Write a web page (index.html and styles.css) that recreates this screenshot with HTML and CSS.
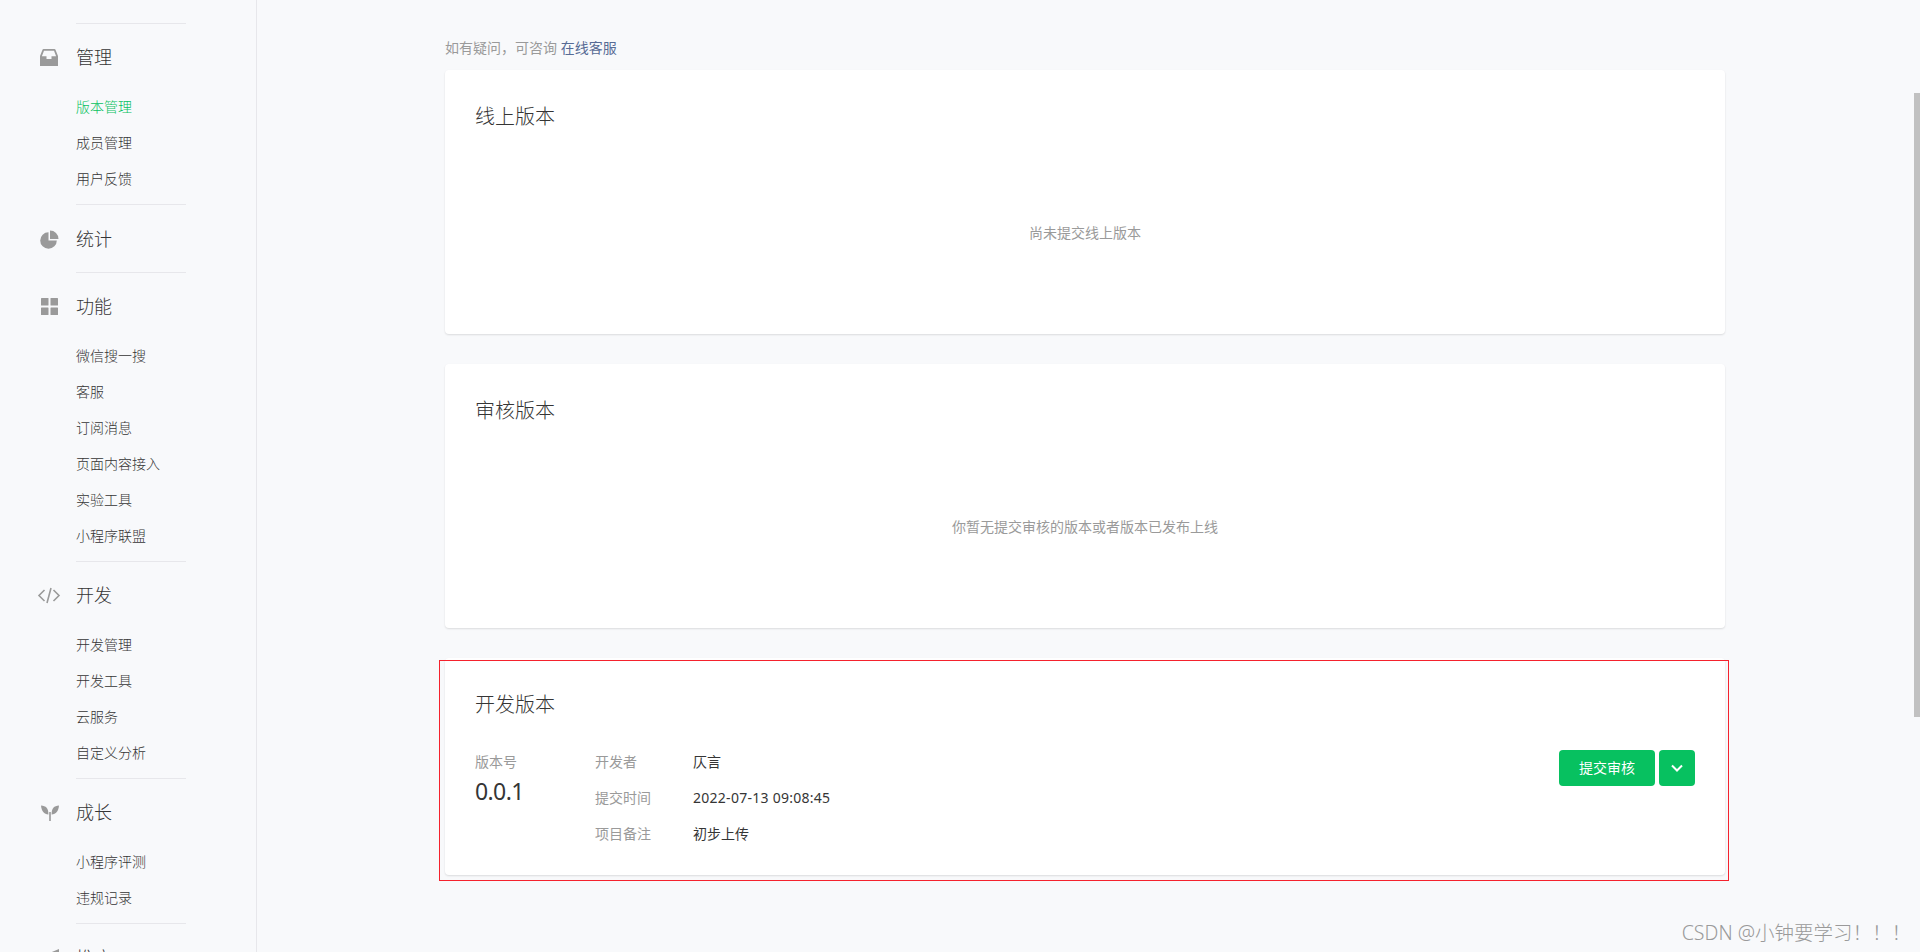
FILE: index.html
```html
<!DOCTYPE html>
<html lang="zh-CN">
<head>
<meta charset="utf-8">
<title>版本管理</title>
<link rel="stylesheet" href="styles.css">
</head>
<body>
<div class="page">

  <div class="sidebar">
    <div class="nav-group">
      <div class="nav-title">
        <svg class="nav-icon" viewBox="0 0 24 24"><path fill-rule="evenodd" d="M6.500 4h11a1 1 0 0 1 .9.6L21 11v10H3V11l2.600-6.400a1 1 0 0 1 .9-.6zM7 5.800 4.900 11.200H9.500V14h5v-2.800h4.600L17 5.800z"/></svg>
        <span>管理</span>
      </div>
      <div class="nav-sub">
        <a class="nav-item active">版本管理</a>
        <a class="nav-item">成员管理</a>
        <a class="nav-item">用户反馈</a>
      </div>
    </div>
    <div class="nav-group flat">
      <div class="nav-title">
        <svg class="nav-icon" viewBox="0 0 24 24"><path d="M11.500 5.200v8.300h8.300A8.300 8.300 0 1 1 11.500 5.200z"/><path d="M13 3.500a8.500 8.500 0 0 1 8.500 8.500H13z"/></svg>
        <span>统计</span>
      </div>
    </div>
    <div class="nav-group">
      <div class="nav-title">
        <svg class="nav-icon" viewBox="0 0 24 24"><rect x="4" y="4" width="7.500" height="7.500" rx=".5"/><rect x="13.500" y="4" width="7.500" height="7.500" rx=".5"/><rect x="4" y="13.500" width="7.500" height="7.500" rx=".5"/><rect x="13.500" y="13.500" width="7.500" height="7.500" rx=".5"/></svg>
        <span>功能</span>
      </div>
      <div class="nav-sub">
        <a class="nav-item">微信搜一搜</a>
        <a class="nav-item">客服</a>
        <a class="nav-item">订阅消息</a>
        <a class="nav-item">页面内容接入</a>
        <a class="nav-item">实验工具</a>
        <a class="nav-item">小程序联盟</a>
      </div>
    </div>
    <div class="nav-group">
      <div class="nav-title">
        <svg class="nav-icon code" viewBox="0 0 24 24"><path d="M7.500 7 2 12.500 7.500 18M16.500 7 22 12.500 16.500 18M14 5 10 20"/></svg>
        <span>开发</span>
      </div>
      <div class="nav-sub">
        <a class="nav-item">开发管理</a>
        <a class="nav-item">开发工具</a>
        <a class="nav-item">云服务</a>
        <a class="nav-item">自定义分析</a>
      </div>
    </div>
    <div class="nav-group">
      <div class="nav-title">
        <svg class="nav-icon" viewBox="0 0 24 24"><path d="M4 5.500c5 .2 7.500 3 7.400 9C7 14 4.500 11 4 5.500z"/><path d="M22 5.500c-5 .2-7.500 3-7.400 9 4.400-.5 6.900-3.500 7.400-9z"/><rect x="12.200" y="12" width="1.600" height="9"/></svg>
        <span>成长</span>
      </div>
      <div class="nav-sub">
        <a class="nav-item">小程序评测</a>
        <a class="nav-item">违规记录</a>
      </div>
    </div>
    <div class="nav-group flat">
      <div class="nav-title">
        <svg class="nav-icon" viewBox="0 0 24 24"><path d="M10 8 22 3v18l-12-4H5v-9z"/></svg>
        <span>推广</span>
      </div>
    </div>
  </div>

  <div class="main">
    <div class="content">
      <p class="tips">如有疑问，可咨询 <a class="link">在线客服</a></p>

      <div class="card">
        <h3 class="card-title">线上版本</h3>
        <div class="empty">尚未提交线上版本</div>
      </div>

      <div class="card">
        <h3 class="card-title">审核版本</h3>
        <div class="empty">你暂无提交审核的版本或者版本已发布上线</div>
      </div>

      <div class="card dev">
        <h3 class="card-title">开发版本</h3>
        <div class="version">
          <div class="version-no">
            <div class="label">版本号</div>
            <div class="number">0.0.1</div>
          </div>
          <div class="info">
            <div class="info-row"><span class="label">开发者</span><span class="value">仄言</span></div>
            <div class="info-row"><span class="label">提交时间</span><span class="value date">2022-07-13 09:08:45</span></div>
            <div class="info-row"><span class="label">项目备注</span><span class="value">初步上传</span></div>
          </div>
          <div class="actions">
            <button class="btn">提交审核</button>
            <button class="btn more"><svg viewBox="0 0 12 8"><path d="M1 1.500 6 6.500l5-5"/></svg></button>
          </div>
        </div>
        <div class="mark"></div>
      </div>
    </div>
  </div>

  <div class="scroll-thumb"></div>
  <div class="watermark">CSDN @小钟要学习！！！</div>
</div>
</body>
</html>
```

FILE: styles.css
```css
* {
  box-sizing: border-box;
}

html, body {
  margin: 0;
  height: 100%;
  overflow: hidden;
}

body {
  background: #f8f9fb;
  color: #353535;
  font: 14px/20px "Noto Sans", "Noto Sans CJK SC", sans-serif;
}

.page {
  position: relative;
  display: flex;
  height: 952px;
  overflow: hidden;
  padding-right: 7px;
}

/* left menu */
.sidebar {
  width: 257px;
  flex: none;
  padding-top: 23px;
  border-right: 1px solid #e7e7eb;
}

.nav-group {
  margin-left: 37px;
  padding-bottom: 7px;
}

.nav-group::before {
  content: "";
  display: block;
  width: 110px;
  height: 1px;
  margin-left: 39px;
  background: #e7e7eb;
}

.nav-title {
  display: flex;
  align-items: center;
  height: 24px;
  margin: 21px 0 20px;
  font-size: 18px;
  font-weight: 300;
}

.flat {
  padding-bottom: 1px;
}

.flat .nav-title {
  margin-top: 22px;
}

.nav-icon {
  width: 24px;
  height: 24px;
  margin-right: 15px;
  fill: #9a9a9a;
}

.nav-icon.code {
  fill: none;
  stroke: #9a9a9a;
  stroke-width: 1.6;
}

.nav-sub {
  padding-left: 39px;
}

.nav-item {
  display: block;
  height: 36px;
  line-height: 36px;
  color: #353535;
  font-weight: 300;
}

.nav-item.active {
  color: #07c160;
}

/* main column */
.main {
  flex: 1;
  min-width: 0;
}

.content {
  width: 1280px;
  margin: 0 auto;
  padding-top: 38px;
}

.tips {
  margin: 0 0 11px;
  padding-bottom: 1px;
  color: #9a9a9a;
}

.link {
  color: #576b95;
}

.card {
  display: flex;
  flex-direction: column;
  height: 264px;
  margin-bottom: 30px;
  padding: 33px 30px 0;
  background: #fff;
  border-radius: 4px;
  box-shadow: 0 1px 2px rgba(0, 0, 0, .12);
}

.card-title {
  margin: 0;
  font-size: 20px;
  font-weight: 300;
  line-height: 28px;
}

.empty {
  flex: 1;
  display: flex;
  align-items: center;
  justify-content: center;
  color: #9a9a9a;
}

.dev {
  position: relative;
  height: 217px;
}

.version {
  display: flex;
  margin-top: 25px;
}

.version-no {
  width: 120px;
  flex: none;
}

.version-no .label {
  line-height: 36px;
}

.number {
  font-size: 23px;
  letter-spacing: -.6px;
  line-height: 22px;
}

.label {
  color: #9a9a9a;
}

.info {
  flex: 1;
}

.info-row {
  display: flex;
  height: 36px;
  line-height: 36px;
}

.info-row .label {
  width: 98px;
  flex: none;
}

.date {
  letter-spacing: .27px;
}

.actions {
  display: flex;
  gap: 4px;
  margin-top: 6px;
}

.btn {
  width: 96px;
  height: 36px;
  padding: 0;
  border: 0;
  border-radius: 4px;
  background: #07c160;
  color: #fff;
  font: inherit;
}

.btn.more {
  display: flex;
  align-items: center;
  justify-content: center;
  width: 36px;
}

.btn.more svg {
  width: 12px;
  height: 8px;
  fill: none;
  stroke: #fff;
  stroke-width: 2;
}

/* things lying on top of the page */
.mark {
  position: absolute;
  top: 2px;
  left: -6px;
  right: -4px;
  bottom: -6px;
  border: 1px solid #f5222d;
}

.scroll-thumb {
  position: absolute;
  top: 93px;
  right: 0;
  width: 6px;
  height: 624px;
  background: #c1c1c1;
}

.watermark {
  position: absolute;
  right: 9px;
  bottom: 6px;
  color: #9a9a9a;
  font-size: 19.5px;
  font-weight: 300;
  line-height: 26px;
}
```
